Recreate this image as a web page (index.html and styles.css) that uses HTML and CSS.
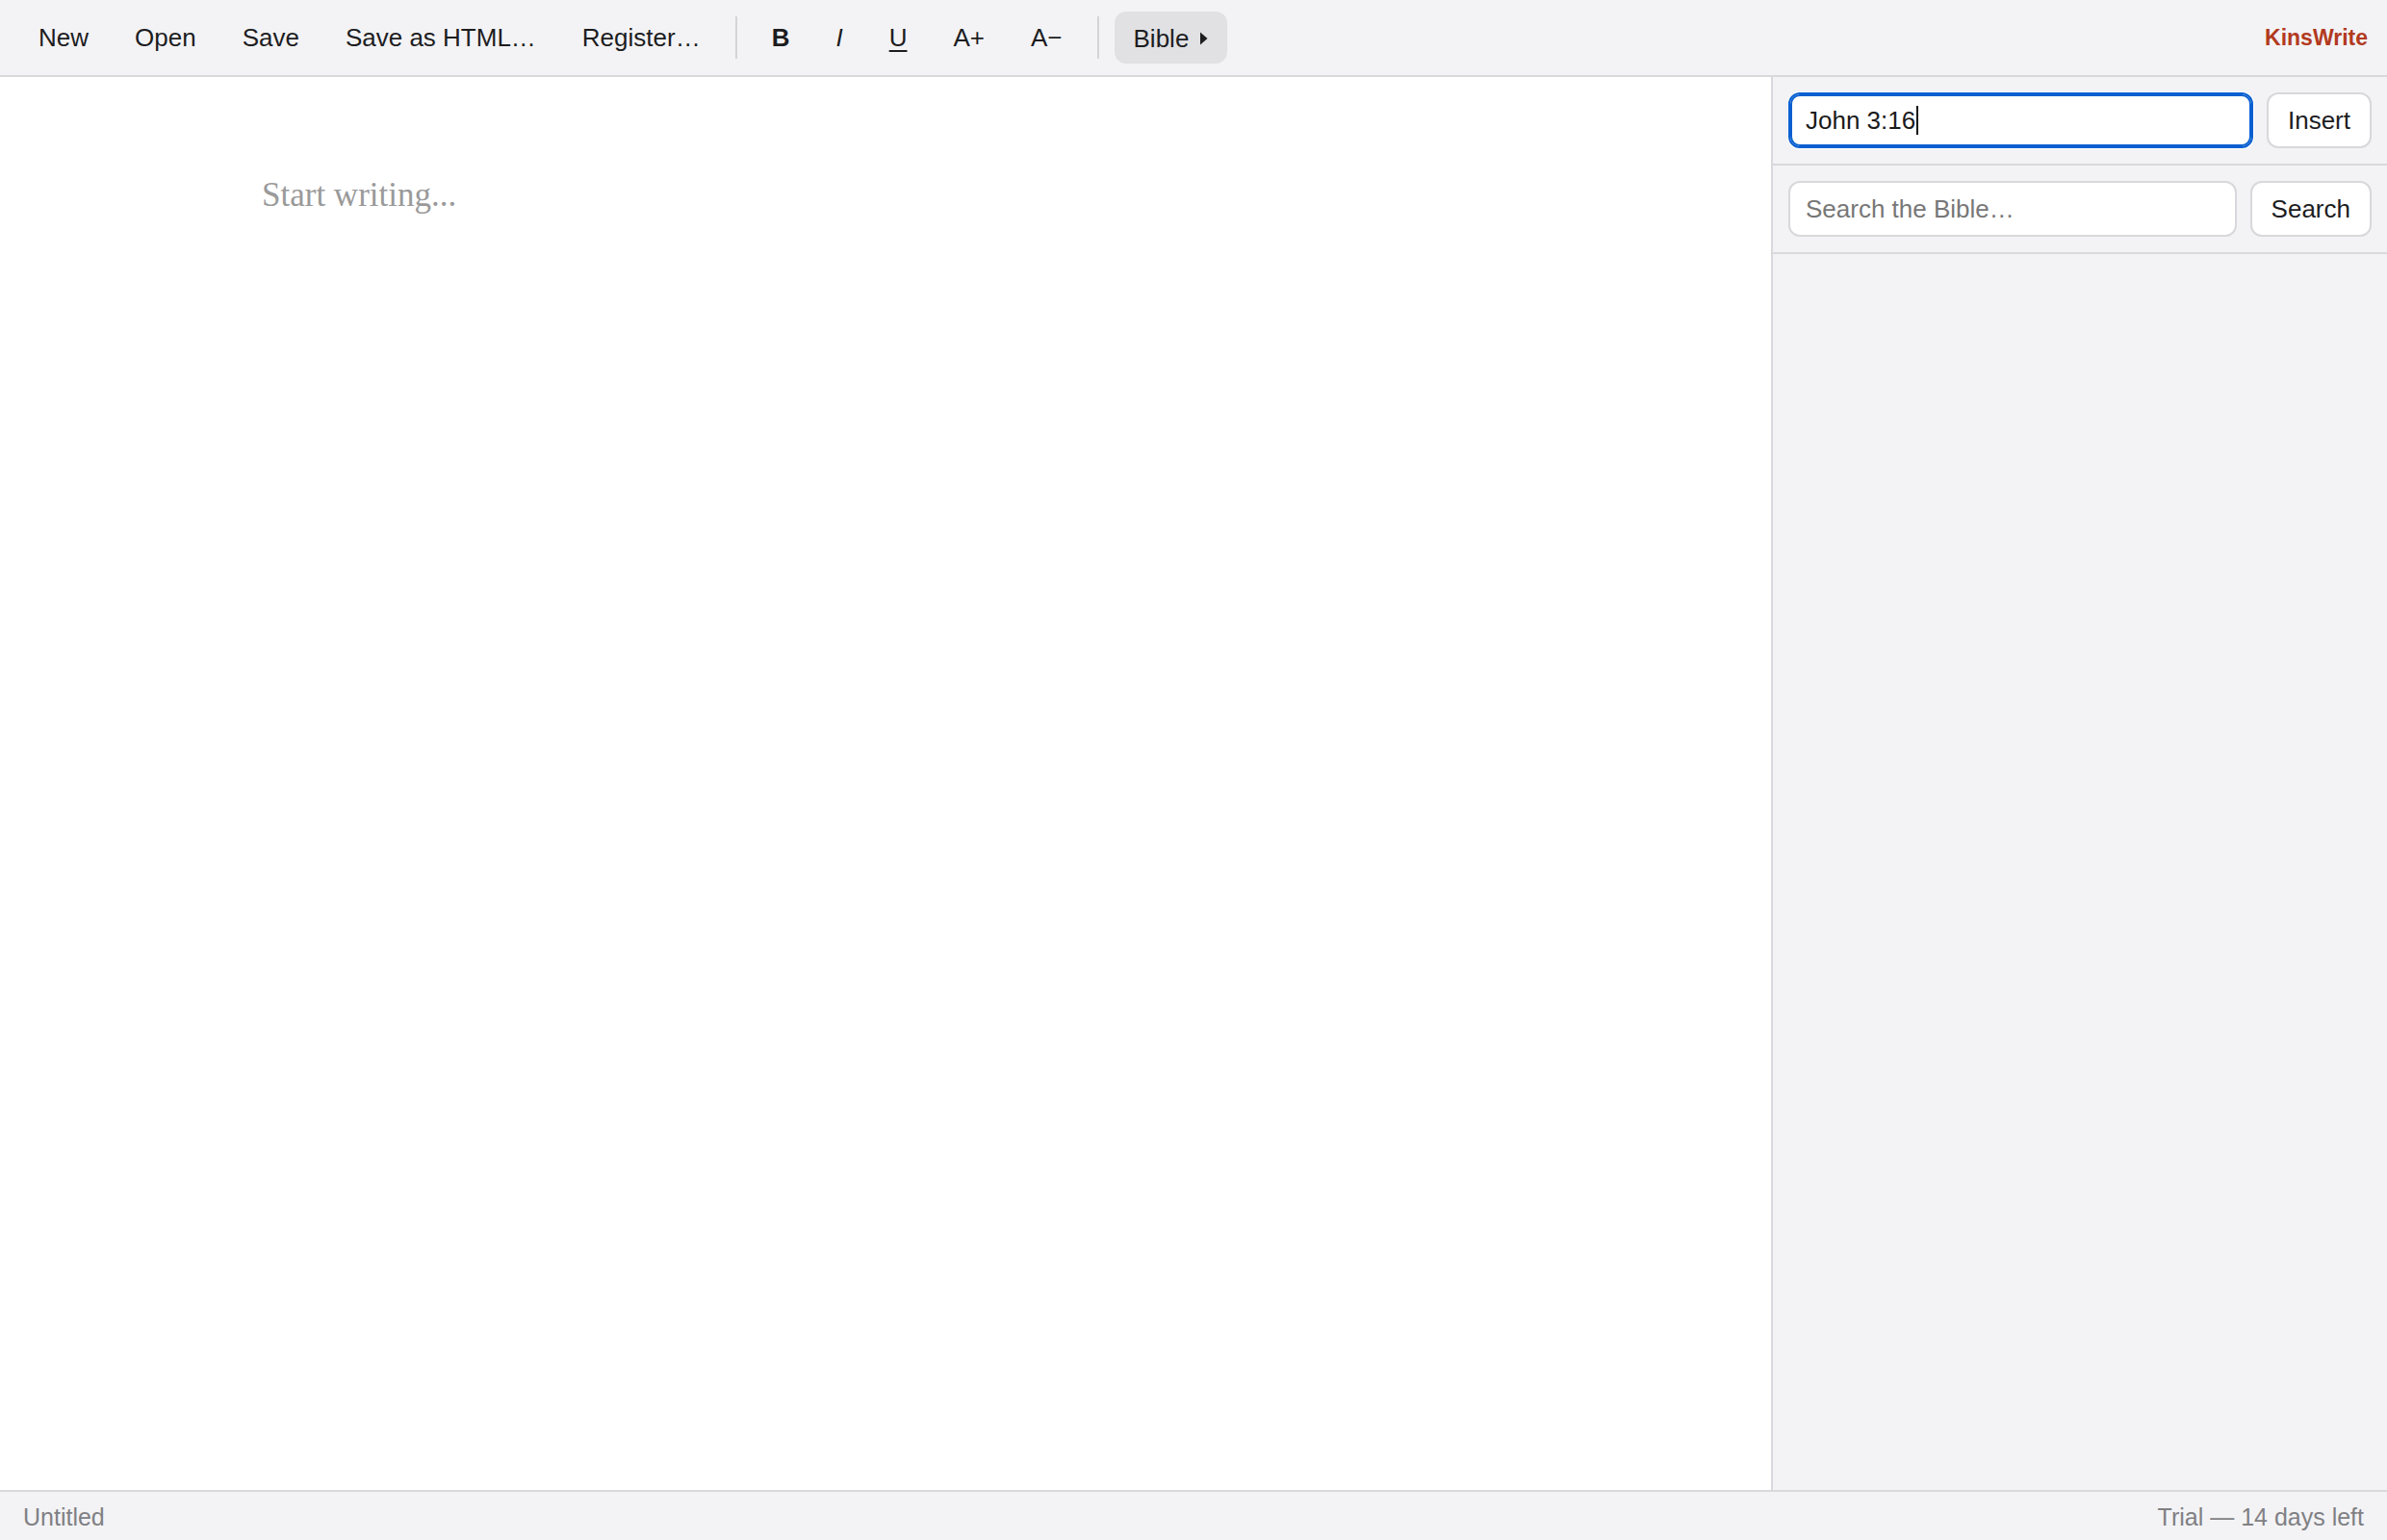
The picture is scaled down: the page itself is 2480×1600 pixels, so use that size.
FILE: index.html
```html
<!DOCTYPE html>
<html lang="en">
<head>
<meta charset="utf-8">
<title>KinsWrite</title>
<link rel="stylesheet" href="styles.css">
</head>
<body>
<div class="app">
  <header class="toolbar">
    <button class="tb-btn">New</button>
    <button class="tb-btn">Open</button>
    <button class="tb-btn">Save</button>
    <button class="tb-btn">Save as HTML…</button>
    <button class="tb-btn">Register…</button>
    <span class="tb-sep"></span>
    <button class="tb-btn fmt-bold">B</button>
    <button class="tb-btn fmt-italic">I</button>
    <button class="tb-btn fmt-under">U</button>
    <button class="tb-btn">A+</button>
    <button class="tb-btn">A−</button>
    <span class="tb-sep"></span>
    <button class="tb-btn tb-menu">Bible<svg class="caret-right" width="9" height="14" viewBox="0 0 9 14"><path d="M1 0.5 L8.5 7 L1 13.5 Z" fill="#1d1d1f"/></svg></button>
    <div class="brand">KinsWrite</div>
  </header>
  <main class="workspace">
    <section class="editor">
      <div class="placeholder">Start writing...</div>
    </section>
    <aside class="sidebar">
      <div class="side-row">
        <div class="field focused"><span class="field-text">John 3:16</span><span class="text-caret"></span></div>
        <button class="side-btn">Insert</button>
      </div>
      <div class="side-row">
        <div class="field"><span class="field-placeholder">Search the Bible…</span></div>
        <button class="side-btn">Search</button>
      </div>
    </aside>
  </main>
  <footer class="statusbar">
    <span class="status-left">Untitled</span>
    <span class="status-right">Trial — 14 days left</span>
  </footer>
</div>
</body>
</html>
```
FILE: styles.css
```css
* { box-sizing: border-box; }

html, body {
  margin: 0;
  padding: 0;
  height: 100%;
}

body {
  font-family: "Liberation Sans", Arial, sans-serif;
  color: #1d1d1f;
  background: #ffffff;
}

.app {
  display: flex;
  flex-direction: column;
  height: 100vh;
}

/* Toolbar */
.toolbar {
  flex: 0 0 80px;
  height: 80px;
  display: flex;
  align-items: center;
  gap: 8px;
  padding: 0 20px;
  background: #f3f3f5;
  border-bottom: 2px solid #d9d9dd;
}

.tb-btn {
  height: 54px;
  padding: 0 20px;
  border: none;
  border-radius: 12px;
  background: transparent;
  font-family: "Liberation Sans", Arial, sans-serif;
  font-size: 26px;
  color: #1d1d1f;
  display: flex;
  align-items: center;
  cursor: pointer;
}

.fmt-bold { font-weight: bold; }
.fmt-italic { font-style: italic; }
.fmt-under { text-decoration: underline; text-underline-offset: 4px; text-decoration-thickness: 2px; }

.tb-sep {
  width: 2px;
  height: 44px;
  margin: 0 8px;
  background: #d4d4d8;
}

.tb-menu {
  background: #e1e1e4;
  gap: 11px;
  padding-top: 2px;
}

.caret-right { display: block; }

.brand {
  margin-left: auto;
  font-weight: bold;
  font-size: 23px;
  color: #b23a1e;
}

/* Workspace */
.workspace {
  flex: 1 1 auto;
  display: flex;
  min-height: 0;
}

.editor {
  flex: 1 1 auto;
  background: #ffffff;
  padding: 95px 272px;
}

.placeholder {
  font-family: "Liberation Serif", Georgia, serif;
  font-size: 35px;
  line-height: 56px;
  color: #9a9a9a;
}

.sidebar {
  flex: 0 0 640px;
  width: 640px;
  background: #f3f3f5;
  border-left: 2px solid #d9d9dd;
}

.side-row {
  display: flex;
  gap: 14px;
  padding: 16px;
  border-bottom: 2px solid #d9d9dd;
}

.field {
  flex: 1 1 auto;
  height: 58px;
  display: flex;
  align-items: center;
  padding: 0 16px;
  background: #ffffff;
  border: 2px solid #d8d8dc;
  border-radius: 12px;
  font-size: 26px;
}

.field.focused {
  border-color: #0a60d0;
  box-shadow: inset 0 0 0 2px #0a60d0, 0 0 0 1px #ffffff;
}

.field-text { color: #1a1a1a; }

.text-caret {
  width: 2px;
  height: 30px;
  background: #111111;
  margin-left: 1px;
}

.field-placeholder { color: #777777; }

.side-btn {
  flex: 0 0 auto;
  height: 58px;
  padding: 0 20px;
  background: #ffffff;
  border: 2px solid #d8d8dc;
  border-radius: 12px;
  font-family: "Liberation Sans", Arial, sans-serif;
  font-size: 26px;
  color: #1d1d1f;
}

/* Status bar */
.statusbar {
  flex: 0 0 52px;
  height: 52px;
  display: flex;
  align-items: center;
  justify-content: space-between;
  padding: 3px 24px 0;
  background: #f3f3f5;
  border-top: 2px solid #d9d9dd;
  font-size: 25px;
  color: #808084;
}
```
